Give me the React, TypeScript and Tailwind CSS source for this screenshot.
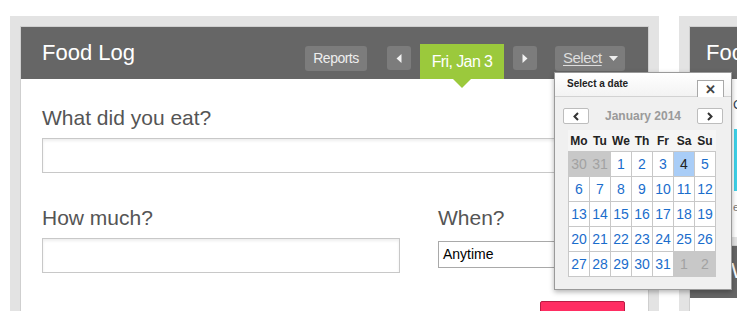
import React from 'react'

interface Cell {
  day: number
  muted?: boolean
  selected?: boolean
}

const weekdays = ['Mo', 'Tu', 'We', 'Th', 'Fr', 'Sa', 'Su']

function buildWeeks(): Cell[][] {
  const cells: Cell[] = [{ day: 30, muted: true }, { day: 31, muted: true }]
  for (let d = 1; d <= 31; d++) cells.push({ day: d, selected: d === 4 })
  cells.push({ day: 1, muted: true }, { day: 2, muted: true })
  const weeks: Cell[][] = []
  for (let i = 0; i < cells.length; i += 7) weeks.push(cells.slice(i, i + 7))
  return weeks
}

function Chevron({ dir }: { dir: 'left' | 'right' }) {
  return (
    <svg width="6" height="9" viewBox="0 0 6 9">
      <path
        d={dir === 'left' ? 'M5 1L1.5 4.5L5 8' : 'M1 1L4.5 4.5L1 8'}
        fill="none"
        stroke="#333"
        strokeWidth="2"
      />
    </svg>
  )
}

function DatePicker() {
  const weeks = buildWeeks()
  return (
    <div className="absolute left-[554px] top-[72px] w-[178px] border border-[#9a9a9a] bg-[#f0f0f0] pb-[12px] shadow-[0_2px_5px_rgba(0,0,0,0.3)]">
      <div className="flex h-[24px] items-end justify-between border-b border-[#d2d2d2] bg-gradient-to-b from-white to-[#f3f3f3] pl-[12px] pr-[7px]">
        <span className="mb-[6px] text-[10px] font-bold leading-[12px] text-[#222]">Select a date</span>
        <div className="-mb-[1px] flex h-[17px] w-[27px] items-center justify-center border border-b-0 border-[#a8a8a8] bg-white text-[13px] font-bold leading-none text-[#444]">
          ✕
        </div>
      </div>

      <div className="mt-[11px] flex items-center justify-between px-[8px]">
        <div className="flex h-[16px] w-[26px] items-center justify-center rounded-[2px] border border-[#bdbdbd] bg-white">
          <Chevron dir="left" />
        </div>
        <span className="text-[12px] font-bold leading-none text-[#9a9a9a]">January 2014</span>
        <div className="flex h-[16px] w-[26px] items-center justify-center rounded-[2px] border border-[#bdbdbd] bg-white">
          <Chevron dir="right" />
        </div>
      </div>

      <div className="ml-[13px] mt-[6px] grid h-[21px] w-[148px] grid-cols-[repeat(7,20px)] gap-x-[1px] bg-[#f5f5f5] px-[1px]">
        {weekdays.map((w) => (
          <div key={w} className="flex items-center justify-center text-[12px] font-bold text-[#222]">
            {w}
          </div>
        ))}
      </div>

      <div className="ml-[13px] grid w-[148px] grid-cols-[repeat(7,20px)] auto-rows-[24px] gap-[1px] bg-[#c8c8c8] p-[1px]">
        {weeks.flat().map((c, i) => (
          <div
            key={i}
            className={`flex items-center justify-center text-[14px] ${
              c.muted
                ? 'bg-[#c8c8c8] text-[#a2a2a2]'
                : c.selected
                ? 'bg-[#a9cdf7] text-[#222]'
                : 'bg-white text-[#1a6dcc]'
            }`}
          >
            {c.day}
          </div>
        ))}
      </div>
    </div>
  )
}

function FoodLogPanel() {
  return (
    <div className="h-[295px] w-[649px] shrink-0 bg-[#e3e3e3] px-[10px] pt-[10px]">
      <div className="h-full border border-b-0 border-[#cfcfcf] bg-white">
        <div className="flex h-[52px] bg-[#666666]">
          <div className="pl-[21px] pt-[15px] text-[22px] leading-[22px] text-white">Food Log</div>
          <div className="ml-auto flex items-start pr-[23px]">
            <button className="mt-[19px] h-[25px] w-[62px] rounded-[3px] bg-[#7c7c7c] text-[14px] tracking-[-0.5px] text-[#eeeeee]">
              Reports
            </button>
            <button className="ml-[20px] mt-[19px] flex h-[24px] w-[24px] items-center justify-center rounded-[3px] bg-[#7c7c7c]">
              <svg width="6" height="9" viewBox="0 0 6 9">
                <path d="M5.5 0V9L0.5 4.5Z" fill="#f2f2f2" />
              </svg>
            </button>
            <div className="relative ml-[9px] mt-[17px] flex h-[35px] w-[84px] items-center justify-center bg-[#9bc93c] text-[16px] tracking-[-0.6px] text-white">
              Fri, Jan 3
              <span className="absolute left-1/2 top-full -translate-x-1/2 border-x-[9px] border-t-[9px] border-x-transparent border-t-[#9bc93c]" />
            </div>
            <button className="ml-[9px] mt-[19px] flex h-[24px] w-[24px] items-center justify-center rounded-[3px] bg-[#7c7c7c]">
              <svg width="6" height="9" viewBox="0 0 6 9">
                <path d="M0.5 0V9L5.5 4.5Z" fill="#f2f2f2" />
              </svg>
            </button>
            <button className="ml-[18px] mt-[19px] flex h-[25px] w-[70px] items-center rounded-[3px] bg-[#7c7c7c] pl-[8px] text-[15px] tracking-[-0.5px] text-[#dddddd]">
              <span className="underline underline-offset-2">Select</span>
              <svg className="ml-[7px]" width="9" height="5" viewBox="0 0 9 5">
                <path d="M0 0H9L4.5 5Z" fill="#eeeeee" />
              </svg>
            </button>
          </div>
        </div>

        <div className="px-[21px]">
          <div className="mt-[27px] h-[24px] text-[21px] leading-[24px] text-[#555]">What did you eat?</div>
          <div className="mt-[8px] h-[35px] border border-[#c8c8c8] shadow-[inset_0_2px_3px_rgba(0,0,0,0.07)]" />

          <div className="mt-[33px] flex">
            <div className="w-[358px]">
              <div className="h-[24px] text-[21px] leading-[24px] text-[#555]">How much?</div>
              <div className="mt-[8px] h-[35px] border border-[#c8c8c8] shadow-[inset_0_2px_3px_rgba(0,0,0,0.07)]" />
            </div>
            <div className="ml-[38px] flex-1">
              <div className="h-[24px] text-[21px] leading-[24px] text-[#555]">When?</div>
              <div className="mt-[11px] flex h-[27px] items-center border border-[#a9a9a9] bg-white pl-[4px] text-[14px] text-black">
                Anytime
              </div>
            </div>
          </div>

          <div className="mt-[28px] flex justify-end pr-[2px]">
            <div className="h-[30px] w-[85px] rounded-t-[2px] border border-[#b81c44] bg-[#ff2d62]" />
          </div>
        </div>
      </div>
    </div>
  )
}

function SidePanel() {
  return (
    <div className="ml-[20px] h-[295px] w-[200px] shrink-0 bg-[#e3e3e3] pl-[10px] pt-[10px]">
      <div className="border-l border-t border-[#cfcfcf] bg-white">
        <div className="h-[52px] bg-[#666666] pl-[16px] pt-[15px] text-[22px] leading-[22px] text-white">Food Summary</div>
        <div className="h-[158px] pl-[43px] pt-[19px]">
          <div className="text-[13px] leading-[14px] text-[#2f3f55]">Calories</div>
          <div className="ml-[1px] mt-[17px] h-[62px] w-[120px] bg-[#3fd0e7]" />
          <div className="mt-[10px] text-[11px] leading-[12px] text-[#777]">eaten</div>
        </div>
      </div>
      <div className="mt-[8px] border-l border-t border-[#cfcfcf] bg-white">
        <div className="h-[52px] bg-[#666666] pl-[41px] pt-[14px] text-[22px] leading-[22px] text-white">Weight</div>
        <div className="h-[20px] bg-white" />
      </div>
    </div>
  )
}

export default function App() {
  return (
    <div className="relative h-[311px] w-[737px] overflow-hidden bg-white font-['Liberation_Sans',Arial,sans-serif]">
      <div className="flex pl-[10px] pt-[16px]">
        <FoodLogPanel />
        <SidePanel />
      </div>
      <DatePicker />
    </div>
  )
}
